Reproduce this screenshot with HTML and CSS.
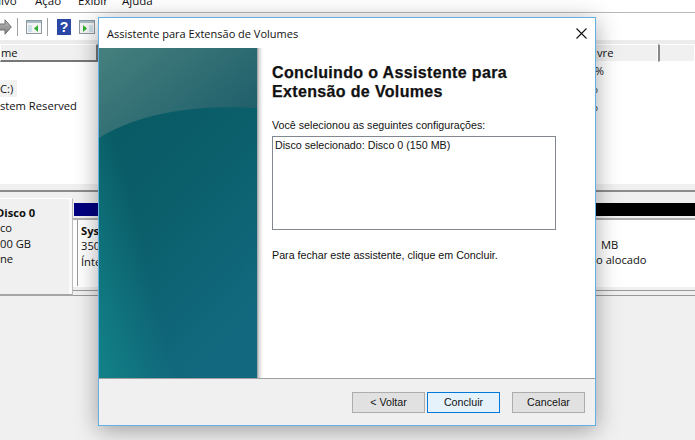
FILE: index.html
```html
<!DOCTYPE html>
<html lang="pt">
<head>
<meta charset="utf-8">
<title>Assistente para Extensão de Volumes</title>
<link rel="stylesheet" href="styles.css">
</head>
<body>
<div class="app">
  <div class="menubar">
    <span class="m-1">uivo</span><span class="m-2">Ação</span><span class="m-3">Exibir</span><span class="m-4">Ajuda</span>
  </div>
  <div class="toolbar">
    <svg class="tb-arrow" width="12" height="16" viewBox="0 0 12 16"><defs><linearGradient id="ar" x1="0" y1="0" x2="0" y2="1"><stop offset="0" stop-color="#bdbdbd"/><stop offset="1" stop-color="#7d7d7d"/></linearGradient></defs><path d="M-1 5h6V.800L11.300 8 5 15.200V11H-1z" fill="url(#ar)" stroke="#6f6f6f"/></svg>
    <i class="tb-sep"></i>
    <svg class="tb-ico" width="16" height="14" viewBox="0 0 16 14"><rect x=".5" y=".5" width="15" height="13" fill="#f4f4f4" stroke="#8a9aa0"/><rect x="1" y="1" width="14" height="2" fill="#a9bcc6"/><rect x="2" y="5" width="4" height="7" fill="#cfe0ea"/><path d="M12 5v7L8 8.500z" fill="#2fae2f"/></svg>
    <i class="tb-sep"></i>
    <svg class="tb-help" width="14" height="16" viewBox="0 0 14 16"><rect width="14" height="16" fill="#2a48a8"/><text x="7" y="13" text-anchor="middle" font-family="Liberation Sans" font-weight="700" font-size="14" fill="#fff">?</text></svg>
    <svg class="tb-ico" width="16" height="14" viewBox="0 0 16 14"><rect x=".5" y=".5" width="15" height="13" fill="#f4f4f4" stroke="#8a9aa0"/><rect x="1" y="1" width="14" height="2" fill="#a9bcc6"/><rect x="10" y="5" width="4" height="7" fill="#cfe0ea"/><path d="M4 5v7l4-3.500z" fill="#2fae2f"/></svg>
  </div>
  <div class="headers">
    <div class="h-cell h-name">me</div>
    <div class="h-cell h-free">vre</div>
    <div class="h-cell h-last"></div>
  </div>
  <div class="list">
    <div class="row-left">
      <span class="sel">C:)</span>
      <span>stem Reserved</span>
    </div>
    <div class="row-right">
      <span>%</span>
      <span class="dot">%</span>
      <span class="dot">%</span>
    </div>
  </div>
  <div class="splitter"></div>
  <div class="disks">
    <div class="disk-info">
      <b>Disco 0</b>
      <span>co</span>
      <span>00 GB</span>
      <span>ne</span>
    </div>
    <div class="disk-map">
      <div class="bars"><i class="bar-blue"></i><i class="bar-black"></i></div>
      <div class="parts">
        <div class="part-sys"><b>Sys</b><span>350</span><span>Ínte</span></div>
        <div class="part-free"><span class="free-size">MB</span><span>o alocado</span></div>
      </div>
      <div class="rule"></div>
    </div>
  </div>
</div>

<section class="dialog">
  <header class="titlebar">
    <span>Assistente para Extensão de Volumes</span>
    <svg class="close" width="11" height="11" viewBox="0 0 11 11"><path d="M.5.500l10 10M10.500.500l-10 10" stroke="#111" stroke-width="1.100" fill="none"/></svg>
  </header>
  <div class="body">
    <div class="banner">
      <svg width="158" height="330" viewBox="0 0 158 330" preserveAspectRatio="none">
        <defs>
          <linearGradient id="bg" x1="0.100" y1="0" x2="0.600" y2="1">
            <stop offset="0" stop-color="#075860"/><stop offset=".5" stop-color="#0b5f6b"/><stop offset="1" stop-color="#12697f"/>
          </linearGradient>
          <linearGradient id="gl" x1="0" y1="0" x2="1" y2="0.700">
            <stop offset="0" stop-color="#46807e"/><stop offset="1" stop-color="#1f5f6b"/>
          </linearGradient>
          <linearGradient id="cr" x1="0" y1="1" x2="0.380" y2="0.800">
            <stop offset="0" stop-color="#128288"/><stop offset="1" stop-color="#128288" stop-opacity="0"/>
          </linearGradient>
        </defs>
        <rect width="158" height="330" fill="url(#bg)"/>
        <rect width="158" height="330" fill="url(#cr)"/>
        <path d="M0 0H158V60C105 57 45 62 0 90z" fill="url(#gl)"/>
      </svg>
    </div>
    <div class="content">
      <h1>Concluindo o Assistente para Extensão de Volumes</h1>
      <p class="lead">Você selecionou as seguintes configurações:</p>
      <div class="box">Disco selecionado: Disco 0 (150 MB)</div>
      <p class="foot">Para fechar este assistente, clique em Concluir.</p>
    </div>
  </div>
  <footer class="actions">
    <button class="btn">&lt; Voltar</button>
    <button class="btn btn-default">Concluir</button>
    <button class="btn btn-cancel">Cancelar</button>
  </footer>
</section>
</body>
</html>
```
FILE: styles.css
```css
* { box-sizing: border-box; }
html, body { margin: 0; height: 440px; overflow: hidden; }
body { background: #f0f0f0; font-family: "Open Sans", "Noto Sans", sans-serif; font-size: 11.200px; color: #111; position: relative; }

.app { height: 440px; display: flex; flex-direction: column; overflow: hidden; }
.menubar { height: 12px; background: #fff; display: flex; align-items: flex-end; overflow: hidden; line-height: 16px; font-size: 11.500px; flex: none; }
.menubar span { display: block; flex: none; height: 16px; margin-bottom: 3px; }
.m-1 { width: 35px; text-indent: -6px; }
.m-2 { width: 43px; }
.m-3 { width: 44px; }
.toolbar { height: 28px; background: #fff; border-top: 1px solid #b9b9b9; display: flex; align-items: center; flex: none; }
.tb-arrow { margin-right: 5px; }
.tb-sep { width: 1px; height: 18px; background: #a0a0a0; }
.tb-ico { margin: 0 5px 0 8px; }
.tb-help { margin-left: 9px; }
.headers { height: 22px; padding-top: 4px; background: #ececec; display: flex; flex: none; font-size: 11.200px; }
.h-cell { height: 18px; line-height: 16px; background: #f0f0f0; border: 1px solid #fff; }
.h-name { width: 98px; border-right: 2px solid #777; border-bottom: 2px solid #777; }
.h-free { flex: 1; text-align: left; padding-left: 498px; }
.h-last { width: 37px; border-left: 2px solid #888; }

.list { height: 122px; background: #fff; display: flex; justify-content: space-between; flex: none; font-size: 11.200px; }
.row-left { display: flex; flex-direction: column; line-height: 17px; padding-top: 18px; }
.row-left span { width: max-content; }
.row-left .sel { background: #f1f1f1; width: 17px; height: 17px; white-space: nowrap; }
.row-right { display: flex; flex-direction: column; align-items: flex-end; margin-right: 91px; line-height: 18px; }
.dot { margin-right: 6px; }
.splitter { height: 6px; flex: none; background: #f0f0f0; }

.disks { flex: none; height: 106px; border-top: 2px solid #8c8c8c; padding-top: 6px; display: flex; }
.disk-info { width: 73px; height: 98px; background: #f0f0f0; border-right: 1px solid #bbb; box-shadow: inset -3px 0 0 #fafafa; border-bottom: 2px solid #a5a5a5; border-top: 1px solid #fff; display: flex; flex-direction: column; line-height: 15.300px; padding-top: 6px; }
.disk-info b { margin-left: -4px; }
.disk-map { flex: 1; min-width: 0; }
.bars { display: flex; height: 13px; margin: 5px 0 0 1px; }
.bar-blue { flex: 1; background: #00007f; }
.bar-black { width: 99px; background: #000; }
.parts { display: flex; justify-content: space-between; height: 69px; margin-top: 2px; background: #fff; border-top: 2px solid #b0b0b0; }
.part-sys, .part-free { display: flex; flex-direction: column; line-height: 15.300px; }
.part-sys { padding: 3px 0 0 3px; margin-left: 4px; border-left: 1px solid #999; height: 66px; }
.part-free { width: 99px; padding-top: 17px; white-space: nowrap; }
.free-size { margin-left: 5px; }
.rule { height: 6px; margin-top: 3px; border-top: 1px solid #999; border-bottom: 1px solid #999; }

.dialog { position: absolute; left: 98px; top: 17px; width: 498px; height: 409px; background: #fff; border: 1px solid #63b0e4; box-shadow: 0 4px 22px rgba(0,0,0,.35); display: flex; flex-direction: column; font-family: "Liberation Sans", sans-serif; font-size: 10.700px; }
.titlebar { flex: none; height: 30px; display: flex; align-items: center; justify-content: space-between; padding: 0 8px; font-family: "Open Sans", sans-serif; font-size: 11px; }
.body { flex: 1; display: flex; min-height: 0; }
.banner { width: 164px; flex: none; background: linear-gradient(90deg, #8f9a9c 0, #d8d8d8 2px, #fff 6px) no-repeat 100% 0 / 6px 100%; display: flex; }
.banner svg { display: block; }
.content { flex: 1; padding: 15px 0 0 9px; }
h1 { margin: 0; font-size: 16px; letter-spacing: .35px; line-height: 19px; font-weight: 700; width: 260px; -webkit-text-stroke: .25px #111; }
.lead { margin: 17px 0 0; line-height: 14px; }
.box { margin-top: 4px; width: 284px; height: 94px; border: 1px solid #828790; padding: 1px 2px; line-height: 14px; }
.foot { margin: 18px 0 0; line-height: 14px; }
.actions { flex: none; height: 47px; background: #f0f0f0; border-top: 1px solid #a0a0a0; display: flex; align-items: center; padding: 0 10px 0 253px; }
.btn { width: 73px; height: 21px; padding: 0; background: #e1e1e1; border: 1px solid #adadad; font: 10.700px "Liberation Sans", sans-serif; color: #111; }
.btn-default { background: #e5f1fb; border-color: #0078d7; margin-left: 2px; }
.btn-cancel { margin-left: 12px; }
```
